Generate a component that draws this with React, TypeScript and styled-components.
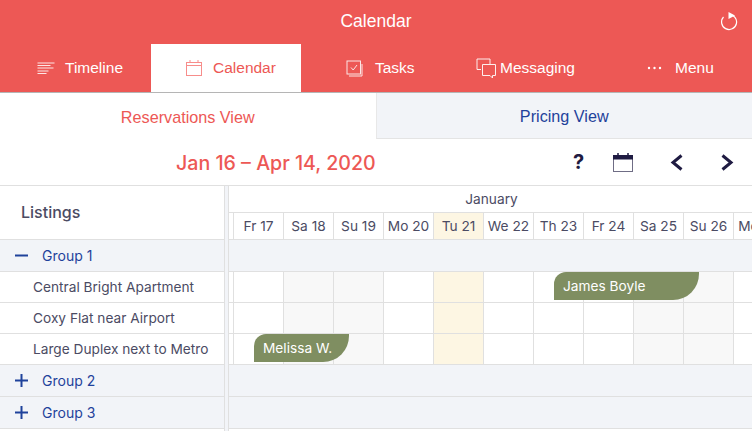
import React from 'react';
import styled, { createGlobalStyle } from 'styled-components';

const GlobalStyle = createGlobalStyle`
  html, body {
    margin: 0;
    padding: 0;
    background: #fff;
    overflow: hidden;
  }
  * { box-sizing: border-box; }
`;

const Page = styled.div`
  width: 752px;
  height: 431px;
  overflow: hidden;
  display: flex;
  flex-direction: column;
  font-family: 'Liberation Sans', Arial, sans-serif;
`;

const Header = styled.header`
  background: #ed5855;
  height: 93px;
  border-bottom: 1px solid #b5b5b5;
  color: #fff;
  flex: none;
`;

const TitleBar = styled.div`
  height: 44px;
  display: flex;
  align-items: center;
  justify-content: center;
  position: relative;
  font-size: 17.5px;
  padding-bottom: 1px;
`;

const RefreshButton = styled.span`
  position: absolute;
  right: 13px;
  top: 11px;
  display: flex;
`;

const Nav = styled.nav`
  display: flex;
  height: 48px;
`;

const NavItem = styled.div<{ $width: number; $active?: boolean; $gap: number; $pad: number }>`
  width: ${(p) => p.$width}px;
  display: flex;
  align-items: center;
  padding-left: ${(p) => p.$pad}px;
  gap: ${(p) => p.$gap}px;
  font-size: 15.5px;
  background: ${(p) => (p.$active ? '#fff' : 'transparent')};
  color: ${(p) => (p.$active ? '#ed5855' : '#fff')};
`;

const Tabs = styled.div`
  display: flex;
  height: 46px;
  flex: none;
`;

const Tab = styled.div<{ $active?: boolean }>`
  flex: 1;
  display: flex;
  align-items: center;
  justify-content: center;
  padding-top: 2px;
  font-size: 16.2px;
  color: ${(p) => (p.$active ? '#ed5855' : '#1f429b')};
  background: ${(p) => (p.$active ? '#fff' : '#f2f4f8')};
  border-bottom: ${(p) => (p.$active ? 'none' : '1px solid #e4e4e4')};
  border-left: ${(p) => (p.$active ? 'none' : '1px solid #e8e8e8')};
`;

const Toolbar = styled.div`
  height: 47px;
  flex: none;
  display: flex;
  align-items: center;
  border-bottom: 1px solid #e0e0e0;
`;

const DateRange = styled.div`
  margin-left: 176px;
  width: 200px;
  padding-top: 2px;
  font-size: 19.6px;
  font-family: Inter, sans-serif;
  font-weight: 500;
  color: #ed5855;
  white-space: nowrap;
`;

const ToolIcons = styled.div`
  margin-left: 197px;
  display: flex;
  align-items: center;
  color: #1f1b42;
`;

const Help = styled.span`
  width: 11px;
  font: 700 20px Inter, sans-serif;
  margin-right: 29px;
  text-align: center;
`;

const PrevButton = styled.svg`
  margin-left: 37px;
`;

const NextButton = styled.svg`
  margin-left: 38px;
`;

const Scheduler = styled.div`
  flex: 1;
  display: flex;
  min-height: 0;
  font-family: Inter, sans-serif;
  font-size: 13.7px;
  color: #4b4b63;
`;

const Sidebar = styled.div`
  width: 225px;
  flex: none;
  border-right: 1px solid #e0e0e0;
`;

const Splitter = styled.div`
  width: 4px;
  flex: none;
  background: #f2f4f8;
  border-right: 1px solid #e0e0e0;
`;

const SidebarHead = styled.div`
  height: 54px;
  padding: 0 0 2px 21px;
  display: flex;
  align-items: center;
  font-size: 16px;
  font-weight: 500;
  border-bottom: 1px solid #e0e0e0;
`;

const GroupRow = styled.div`
  height: 32px;
  display: flex;
  align-items: center;
  padding-left: 15px;
  gap: 14px;
  font-size: 14px;
  background: #f2f4f8;
  color: #1f429b;
  border-bottom: 1px solid #e0e0e0;
`;

const ListingRow = styled.div`
  height: 31px;
  display: flex;
  align-items: center;
  padding: 0 0 1px 33px;
  border-bottom: 1px solid #e0e0e0;
`;

const Timeline = styled.div`
  flex: 1;
  overflow: hidden;
  min-width: 0;
`;

const MonthRow = styled.div`
  height: 27px;
  display: flex;
  align-items: center;
  justify-content: center;
  padding-left: 2px;
  border-bottom: 1px solid #e0e0e0;
`;

const Cells = styled.div<{ $height: number }>`
  height: ${(p) => p.$height}px;
  display: flex;
  position: relative;
  border-bottom: 1px solid #e0e0e0;
`;

const Cell = styled.div<{ $kind?: 'weekend' | 'today' }>`
  width: 50px;
  flex: none;
  border-right: 1px solid #e0e0e0;
  display: flex;
  align-items: center;
  justify-content: center;
  white-space: nowrap;
  background: ${(p) =>
    p.$kind === 'today' ? '#fdf6e3' : p.$kind === 'weekend' ? '#f8f8f8' : '#fff'};
`;

const LeadCell = styled(Cell)`
  width: 5px;
`;

const TimelineGroup = styled.div`
  height: 32px;
  background: #f2f4f8;
  border-bottom: 1px solid #e0e0e0;
`;

const Booking = styled.div<{ $left: number; $width: number }>`
  position: absolute;
  left: ${(p) => p.$left}px;
  width: ${(p) => p.$width}px;
  top: 0;
  height: 28px;
  background: #7f8e61;
  color: #fff;
  padding-left: 9px;
  display: flex;
  align-items: center;
  border-radius: 12px 0 26px 0;
`;

const days: { label: string; kind?: 'weekend' | 'today' }[] = [
  { label: 'Fr 17' },
  { label: 'Sa 18', kind: 'weekend' },
  { label: 'Su 19', kind: 'weekend' },
  { label: 'Mo 20' },
  { label: 'Tu 21', kind: 'today' },
  { label: 'We 22' },
  { label: 'Th 23' },
  { label: 'Fr 24' },
  { label: 'Sa 25', kind: 'weekend' },
  { label: 'Su 26', kind: 'weekend' },
  { label: 'Mo 27' },
];

const RefreshIcon = () => (
  <svg width="18" height="20" viewBox="0 0 18 20" fill="none">
    <path d="M8 3.5A7.5 7.5 0 1 1 2.5 6" stroke="#fff" strokeWidth="1.2" />
    <path d="M7.5 1L14 4.5L7.5 8z" fill="#fff" />
  </svg>
);

const LinesIcon = () => (
  <svg width="18" height="14" viewBox="0 0 18 14" fill="none" stroke="#fff" strokeWidth="1">
    <path d="M0.5 2h17M0.5 4.5h13M0.5 7h16M0.5 10h11M0.5 12.5h9" opacity="0.85" />
  </svg>
);

const CalendarOutline = () => (
  <svg width="18" height="18" viewBox="0 0 18 18" fill="none" stroke="#f78d8b" strokeWidth="1">
    <rect x="1.5" y="3.5" width="15" height="13" />
    <path d="M1.5 6.5h15M5 1v3M13 1v3" />
  </svg>
);

const TasksIcon = () => (
  <svg width="17" height="17" viewBox="0 0 17 17" fill="none" stroke="#fff" strokeWidth="1" opacity="0.85">
    <rect x="1" y="1" width="13.5" height="13" />
    <path d="M3 16h13V4M5 7.5l2.2 2.5L11 5" />
  </svg>
);

const MessagingIcon = () => (
  <svg width="20" height="21" viewBox="0 0 20 21" fill="none" stroke="#fff" strokeWidth="1" opacity="0.9">
    <path d="M5 11.5H1V1h13v5" />
    <path d="M6.5 6.5h13v11h-3v2.5l-2.5-2.5H6.5z" />
  </svg>
);

const DotsIcon = () => (
  <svg width="15" height="4" viewBox="0 0 15 4" fill="#fff">
    <circle cx="2" cy="2" r="1.2" />
    <circle cx="7.5" cy="2" r="1.2" />
    <circle cx="13" cy="2" r="1.2" />
  </svg>
);

const CalendarSolid = () => (
  <svg width="20" height="19" viewBox="0 0 20 19" fill="none">
    <rect x="0.5" y="2.5" width="19" height="16" stroke="#6f6d85" strokeWidth="1" />
    <rect x="0" y="2" width="20" height="4.5" fill="#1f1b42" />
    <path d="M5 0v2M15 0v2" stroke="#1f1b42" strokeWidth="1.5" />
  </svg>
);

const MinusIcon = () => (
  <svg width="13" height="13" viewBox="0 0 13 13" stroke="#1f429b" strokeWidth="2">
    <path d="M0 6.5h13" />
  </svg>
);

const PlusIcon = () => (
  <svg width="13" height="13" viewBox="0 0 13 13" stroke="#1f429b" strokeWidth="2">
    <path d="M0 6.5h13M6.5 0v13" />
  </svg>
);

const timelineCells = (height: number, children?: React.ReactNode, withLabels = false) => (
  <Cells $height={height}>
    <LeadCell />
    {days.map((d) => (
      <Cell key={d.label} $kind={withLabels && d.kind !== 'today' ? undefined : d.kind}>
        {withLabels ? d.label : null}
      </Cell>
    ))}
    {children}
  </Cells>
);

export default function App() {
  return (
    <Page>
      <GlobalStyle />
      <Header>
        <TitleBar>
          Calendar
          <RefreshButton>
            <RefreshIcon />
          </RefreshButton>
        </TitleBar>
        <Nav>
          <NavItem $width={151} $pad={37} $gap={10}>
            <LinesIcon />
            Timeline
          </NavItem>
          <NavItem $width={150} $pad={34} $active $gap={10}>
            <CalendarOutline />
            Calendar
          </NavItem>
          <NavItem $width={150} $pad={45} $gap={12}>
            <TasksIcon />
            Tasks
          </NavItem>
          <NavItem $width={150} $pad={25} $gap={4}>
            <MessagingIcon />
            Messaging
          </NavItem>
          <NavItem $width={151} $pad={46} $gap={13}>
            <DotsIcon />
            Menu
          </NavItem>
        </Nav>
      </Header>
      <Tabs>
        <Tab $active>Reservations View</Tab>
        <Tab>Pricing View</Tab>
      </Tabs>
      <Toolbar>
        <DateRange>Jan 16 – Apr 14, 2020</DateRange>
        <ToolIcons>
          <Help>?</Help>
          <CalendarSolid />
          <PrevButton width="13" height="17" viewBox="0 0 13 17" fill="none" stroke="currentColor" strokeWidth="3">
            <path d="M11.5 1.5L3 8.5l8.5 7" />
          </PrevButton>
          <NextButton width="13" height="17" viewBox="0 0 13 17" fill="none" stroke="currentColor" strokeWidth="3">
            <path d="M1.5 1.5L10 8.5l-8.5 7" />
          </NextButton>
        </ToolIcons>
      </Toolbar>
      <Scheduler>
        <Sidebar>
          <SidebarHead>Listings</SidebarHead>
          <GroupRow>
            <MinusIcon />
            Group 1
          </GroupRow>
          <ListingRow>Central Bright Apartment</ListingRow>
          <ListingRow>Coxy Flat near Airport</ListingRow>
          <ListingRow>Large Duplex next to Metro</ListingRow>
          <GroupRow>
            <PlusIcon />
            Group 2
          </GroupRow>
          <GroupRow>
            <PlusIcon />
            Group 3
          </GroupRow>
        </Sidebar>
        <Splitter />
        <Timeline>
          <MonthRow>January</MonthRow>
          {timelineCells(27, null, true)}
          <TimelineGroup />
          {timelineCells(31, <Booking $left={325} $width={145}>James Boyle</Booking>)}
          {timelineCells(31)}
          {timelineCells(31, <Booking $left={25} $width={95}>Melissa W.</Booking>)}
          <TimelineGroup />
          <TimelineGroup />
        </Timeline>
      </Scheduler>
    </Page>
  );
}
